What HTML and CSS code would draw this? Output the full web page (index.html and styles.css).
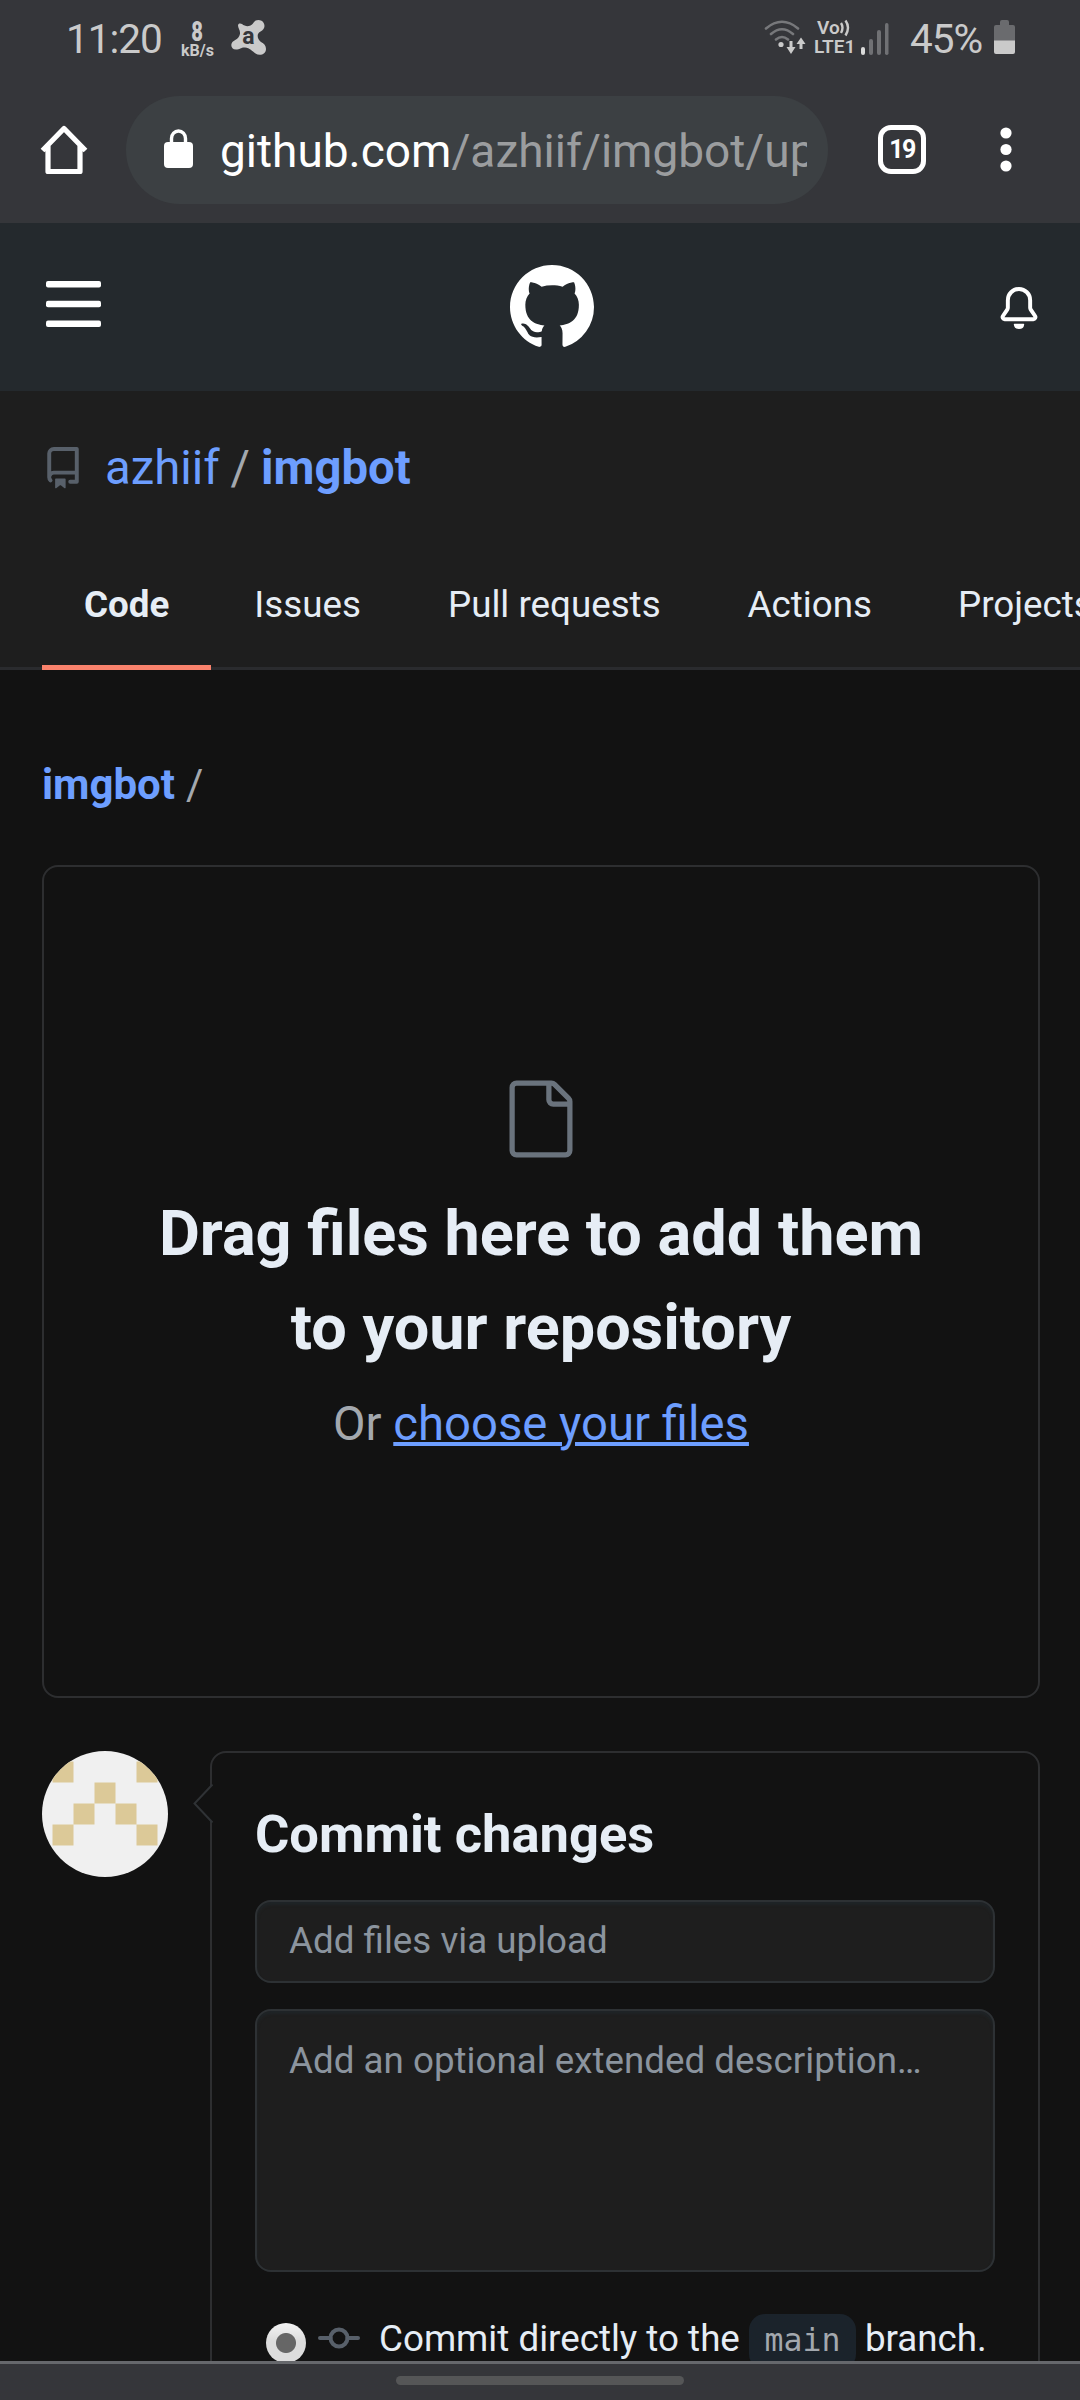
FILE: index.html
```html
<!DOCTYPE html>
<html lang="en">
<head>
<meta charset="utf-8">
<title>Upload files · azhiif/imgbot</title>
<link rel="stylesheet" href="styles.css">
</head>
<body>
<div class="phone">
  <div class="statusbar">
    <span class="clock">11:20</span>
    <span class="speed"><b>8</b><span>kB/s</span></span>
    <svg class="avast" width="36" height="38" viewBox="0 0 36 38"><path fill="#cacaca" d="M7 6.500C7 4 9.500 4 11 5c3 2.500 7 3 10 .5C23 3.500 23.500 1 27.500 1c5 0 7.500 5.500 5 9-1.500 2.500-4.500 2.500-5.500 5-1 3 .5 6 3 8 3 1.500 5 3.500 5 7 0 5-6 7.500-10.500 4.500C21 32 19 29 14 28.500c-4-.3-5 2-9 2C0 30.500-1 25 2 22.500 5 20.500 8.500 19 9 14.500 9.300 11 7 9 7 6.500z"/><text x="17.500" y="25" text-anchor="middle" class="avast-letter">a</text></svg>
    <svg class="signals" width="46" height="38" viewBox="0 0 46 38"><g fill="none" stroke="#77787b" stroke-width="2.600" stroke-linecap="round"><path d="M2 8.500Q18 -5 34 8.500M7 14Q18 4.500 29 14M12 19.500Q18 14.500 24 19.500"/></g><g fill="#cacaca"><circle cx="17" cy="24.500" r="2.600"/><path d="M25.500 21h3v6h3L27 34l-4.500-7h3zM35.500 29v-5h-3l4.500-6.500 4.500 6.500h-3v5z"/></g></svg>
    <span class="volte"><span>Vo<svg width="10" height="18" viewBox="0 0 10 18"><path d="M1 4q3 4.500 0 10M5.500 1.500q5 7 0 15" fill="none" stroke="#cacaca" stroke-width="2.400"/></svg></span><span>LTE1</span></span>
    <svg class="bars" width="28" height="32" viewBox="0 0 28 32"><rect y="24" width="4" height="8" rx="2" fill="#dadada"/><g fill="#707174"><rect x="8" y="16" width="4" height="16" rx="2"/><rect x="16" y="7" width="4" height="25" rx="2"/><rect x="24" width="3.500" height="32" rx="1.700"/></g></svg>
    <span class="percent">45%</span>
    <svg class="battery" width="21" height="34" viewBox="0 0 21 34"><path fill="#6a6b6e" d="M6 2q0-2 2-2h5q2 0 2 2v3h4q2 0 2 2v14H0V7q0-2 2-2h4z"/><path fill="#cacaca" d="M0 20.500h21V32q0 2-2 2H2q-2 0-2-2z"/></svg>
  </div>
  <div class="toolbar">
    <svg class="home" width="50" height="50" viewBox="0 0 50 50"><path d="M3.500 25.500 25 3.500l21.500 22M9 21v25.500h32V21" fill="none" stroke="#fff" stroke-width="5.200" stroke-linejoin="round" stroke-linecap="butt"/></svg>
    <div class="omnibox">
      <svg width="29" height="39" viewBox="0 0 29 39"><rect y="13" width="29" height="26" rx="4" fill="#fff"/><path d="M7.500 14V9.500a7 7.500 0 0 1 14 0V14" fill="none" stroke="#fff" stroke-width="3.400"/></svg>
      <span class="url">github.com<span>/azhiif/imgbot/up</span></span>
    </div>
    <span class="tabs-count">19</span>
    <svg class="more" width="12" height="46" viewBox="0 0 12 46"><g fill="#fff"><circle cx="6" cy="6" r="5.600"/><circle cx="6" cy="22.500" r="5.600"/><circle cx="6" cy="39" r="5.600"/></g></svg>
  </div>
  <div class="page">
    <header class="gh-header">
      <svg class="menu" width="55" height="46" viewBox="0 0 55 46"><g fill="#fff"><rect width="55" height="6.500" rx="2"/><rect y="19.700" width="55" height="6.500" rx="2"/><rect y="39.400" width="55" height="6.500" rx="2"/></g></svg>
      <svg class="mark" width="84" height="84" viewBox="0 0 16 16"><path fill="#fff" fill-rule="evenodd" d="M8 0C3.58 0 0 3.58 0 8c0 3.540 2.290 6.530 5.470 7.590.4.070.55-.17.55-.38 0-.19-.01-.82-.01-1.490-2.010.37-2.530-.49-2.690-.94-.09-.23-.48-.94-.82-1.130-.28-.15-.68-.52-.01-.53.63-.01 1.080.58 1.230.82.72 1.210 1.870.87 2.330.66.07-.52.28-.87.51-1.070-1.780-.2-3.640-.89-3.640-3.950 0-.87.31-1.590.82-2.150-.08-.2-.36-1.020.08-2.120 0 0 .67-.21 2.200.82.64-.18 1.320-.27 2-.27s1.360.09 2 .27c1.530-1.040 2.200-.82 2.200-.82.44 1.100.16 1.920.08 2.120.51.56.82 1.270.82 2.150 0 3.070-1.870 3.750-3.650 3.950.29.25.54.73.54 1.480 0 1.070-.01 1.930-.01 2.200 0 .21.15.46.55.38A8.013 8.013 0 0 0 16 8c0-4.420-3.580-8-8-8z"/></svg>
      <svg class="bell" width="42" height="42" viewBox="0 0 16 16"><path fill="#fff" d="M8 16a2 2 0 001.985-1.750c.017-.137-.097-.25-.235-.25h-3.500c-.138 0-.252.113-.235.250A2 2 0 008 16z"/><path fill="#fff" fill-rule="evenodd" d="M8 1.500A3.500 3.500 0 004.500 5v2.947c0 .346-.102.683-.294.970l-1.703 2.556a.018.018 0 00-.003.010l.001.006c0 .002.002.004.004.006a.017.017 0 00.006.004l.007.001h10.964l.007-.001a.016.016 0 00.006-.004.016.016 0 00.004-.006l.001-.007a.017.017 0 00-.003-.010l-1.703-2.554a1.750 1.750 0 01-.294-.970V5A3.500 3.500 0 008 1.500zM3 5a5 5 0 0110 0v2.947c0 .050.015.098.042.139l1.703 2.555A1.518 1.518 0 0113.482 13H2.518a1.518 1.518 0 01-1.263-2.360l1.703-2.554A.25.25 0 003 7.947V5z"/></svg>
    </header>
    <section class="repo-head">
      <h1 class="repo-title">
        <svg width="42" height="42" viewBox="0 0 16 16"><path fill="#58606a" fill-rule="evenodd" d="M2 2.500A2.500 2.500 0 014.500 0h8.750a.75.75 0 01.75.75v12.500a.75.75 0 01-.75.75h-2.500a.75.75 0 110-1.500h1.750v-2h-8a1 1 0 00-.714 1.700.75.75 0 01-1.072 1.050A2.495 2.495 0 012 11.500v-9zm10.500-1V9h-8c-.356 0-.694.074-1 .208V2.500a1 1 0 011-1h8zM5 12.250v3.250a.25.25 0 00.4.200l1.450-1.087a.25.25 0 01.3 0L8.600 15.700a.25.25 0 00.4-.2v-3.250a.25.25 0 00-.25-.25h-3.500a.25.25 0 00-.25.250z"/></svg>
        <a>azhiif</a><span class="slash">/</span><a class="strong">imgbot</a>
      </h1>
      <nav class="tabs"><a class="tab active">Code</a><a class="tab issues">Issues</a><a class="tab pulls">Pull requests</a><a class="tab actions">Actions</a><a class="tab">Projects</a></nav>
    </section>
    <main class="content">
      <div class="crumb"><a>imgbot</a><span>/</span></div>
      <div class="dropzone">
        <svg width="84" height="84" viewBox="0 0 24 24"><path fill="#6a737d" fill-rule="evenodd" d="M5 2.500a.5.5 0 00-.5.500v18a.5.5 0 00.5.500h14a.5.5 0 00.5-.5V8.500h-4a2 2 0 01-2-2v-4H5zm10 0v4a.5.5 0 00.5.500h4a.5.5 0 00-.146-.336l-4.018-4.018A.5.5 0 0015 2.500zM3 3a2 2 0 012-2h9.982a2 2 0 011.414.586l4.018 4.018A2 2 0 0121 7.018V21a2 2 0 01-2 2H5a2 2 0 01-2-2V3z"/></svg>
        <h2>Drag files here to add them<br>to your repository</h2>
        <p>Or <a>choose your files</a></p>
      </div>
      <div class="commit">
        <svg class="avatar" width="126" height="126" viewBox="0 0 126 126"><rect width="126" height="126" fill="#f0f0f0"/><path fill="#dcc998" d="M10.500 10.500h21v21h-21zM94.500 10.500h21v21h-21zM52.500 31.500h21v21h-21zM31.500 52.500h21v21h-21zM73.500 52.500h21v21h-21zM10.500 73.500h21v21h-21zM94.500 73.500h21v21h-21z"/></svg>
        <div class="card">
          <svg class="notch" width="20" height="42" viewBox="0 0 20 42"><path fill="#121212" d="M20 1 1.500 20.500 20 40z"/><path d="M19.500 1.500 1.500 20.500 19.500 39.500" fill="none" stroke="#2f3235" stroke-width="2"/></svg>
          <h3>Commit changes</h3>
          <div class="field">Add files via upload</div>
          <div class="field area">Add an optional extended description…</div>
          <div class="choice">
            <span class="radio"></span>
            <svg width="42" height="42" viewBox="0 0 42 42"><g fill="none" stroke="#58606a" stroke-width="4"><circle cx="21" cy="21" r="8.500"/><path d="M2 21h10.500M29.500 21H40" stroke-linecap="round"/></g></svg>
            <span class="choice-text">Commit directly to the <code>main</code> branch.</span>
          </div>
        </div>
      </div>
    </main>
  </div>
  <div class="navbar"><span></span></div>
</div>
</body>
</html>
```
FILE: styles.css
```css
* { box-sizing: border-box; }
body { margin: 0; background: #121212; font-family: Roboto, "Liberation Sans", sans-serif; }
svg { display: block; flex: none; }
h1, h2, h3, p { margin: 0; }
.phone { width: 1080px; height: 2400px; display: flex; flex-direction: column; overflow: hidden; }

.statusbar { height: 76px; flex: none; display: flex; align-items: flex-start; background: #35363a; color: #cacaca; padding-left: 66px; }
.clock { font-size: 40.500px; line-height: 48px; margin-top: 15px; width: 115px; letter-spacing: -1px; }
.speed { display: flex; flex-direction: column; align-items: center; width: 33px; margin-top: 20px; font-weight: 700; }
.speed b { font-size: 28px; line-height: 24px; height: 23px; transform: scaleX(.72); }
.speed span { font-size: 16px; line-height: 16px; }
.avast { margin: 19px 0 0 17px; }
.avast-letter { font: 700 23px Roboto, sans-serif; fill: #35363a; }
.signals { margin: 20px 0 0 497px; }
.volte { display: flex; flex-direction: column; margin: 19px 0 0 4px; width: 47px; font-size: 19px; line-height: 18px; font-weight: 600; }
.volte > span { display: flex; padding-left: 3px; height: 18px; white-space: nowrap; }
.volte > span + span { padding-left: 0; line-height: 19px; }
.bars { margin-top: 23px; }
.percent { margin: 15px 0 0 21px; width: 84px; font-size: 40.500px; line-height: 48px; letter-spacing: -1px; }
.battery { margin-top: 20px; }

.toolbar { height: 147px; flex: none; display: flex; align-items: center; background: #35363a; padding: 9px 0 9px 39px; }
.omnibox { display: flex; align-items: center; width: 702px; height: 108px; margin-left: 37px; border-radius: 54px; background: #3c4043; padding-left: 38px; }
.omnibox svg { margin-top: -3px; }
.url { width: 587px; margin-left: 27px; overflow: hidden; white-space: nowrap; color: #fff; font-size: 46px; line-height: 60px; margin-top: 3px; }
.url span { color: #9b9d9f; }
.tabs-count { width: 48px; height: 49px; margin-left: 50px; border: 5.500px solid #fff; border-radius: 13px; display: flex; align-items: center; justify-content: center; color: #fff; font-weight: 700; font-size: 25px; letter-spacing: -1.500px; }
.more { margin-left: 74px; }

.page { flex: 1; min-height: 0; overflow: hidden; background: #121212; }
.gh-header { height: 168px; background: #24292d; display: flex; align-items: center; padding-left: 46px; }
.menu { margin-top: -7px; }
.mark { margin-left: 409px; }
.bell { margin: 2px 0 0 403.500px; }
.repo-head { height: 279px; padding-top: 42px; background: #1e1e1e; }
.repo-title { display: flex; align-items: center; height: 70px; padding-left: 42px; font-size: 47.250px; font-weight: 400; line-height: 70px; color: #6d9eff; }
.repo-title svg { margin-right: 21px; }
.slash { color: #a3a8ae; margin: 0 11px; }
.strong { font-weight: 700; }
.tabs { display: flex; height: 126px; margin-top: 41px; padding-left: 42px; overflow: hidden; box-shadow: inset 0 -3px #2a2b2e; }
.tab { flex: none; padding: 0 42px; font-size: 36.750px; line-height: 121px; color: #e6edf5; border-bottom: 5px solid transparent; }
.tab.active { font-weight: 700; border-color: #f9826c; }
.issues, .pulls { padding-right: 45px; }
.issues { padding-left: 43px; }
.actions { padding-right: 44px; }

.content { padding: 83px 40px 0 42px; }
.crumb { display: flex; gap: 11px; font-size: 42px; line-height: 63px; color: #a3a8ae; }
.crumb a { color: #6d9eff; font-weight: 700; }
.dropzone { height: 833px; margin-top: 49px; border: 2px solid #2d2e30; border-radius: 16px; padding-top: 210px; display: flex; flex-direction: column; align-items: center; text-align: center; }
.dropzone h2 { margin-top: 26px; font-size: 63px; line-height: 94px; color: #e6edf5; white-space: nowrap; }
.dropzone p { margin-top: 14px; font-size: 47.250px; line-height: 71px; color: #a3a8ae; }
.dropzone a { color: #6d9eff; text-decoration: underline; text-decoration-thickness: 4px; }
.commit { display: flex; align-items: flex-start; gap: 42px; margin-top: 53px; }
.avatar { border-radius: 50%; }
.card { position: relative; width: 830px; height: 760px; border: 2px solid #2d2e30; border-radius: 16px; padding: 42px 43px 0; }
.notch { position: absolute; left: -19px; top: 30px; }
.card h3 { font-size: 52.500px; line-height: 79px; color: #e6edf5; }
.field { height: 83px; margin-top: 26px; padding: 11px 32px 0; background: #1e1e1e; border: 2px solid #2d3134; border-radius: 16px; box-shadow: inset 0 3px 3px #1f2427; color: #8b949e; font-size: 36.750px; line-height: 55px; white-space: nowrap; }
.field.area { height: 263px; padding-top: 22px; }
.choice { display: flex; align-items: center; height: 60px; margin-top: 36px; padding-left: 11px; }
.radio { width: 40px; height: 40px; margin: 10px 12px 0 0; border-radius: 50%; background: radial-gradient(circle, #666 9.500px, transparent 10.500px), linear-gradient(#f4f4f4, #dcdcdc 45%); }
.choice-text { margin: 2px 0 0 19px; color: #e6edf5; font-size: 36.750px; line-height: 60px; white-space: nowrap; }
.choice code { padding: 8px 15.500px 12px; border-radius: 16px; background: #1b232b; color: #a3a8ae; font: 31.500px/1 "DejaVu Sans Mono", monospace; }

.navbar { height: 39px; flex: none; position: relative; background: #35363a; border-top: 3px solid #66686c; padding-top: 12px; display: flex; justify-content: center; align-items: flex-start; }
.navbar span { width: 288px; height: 9px; border-radius: 5px; background: #555657; }
```
